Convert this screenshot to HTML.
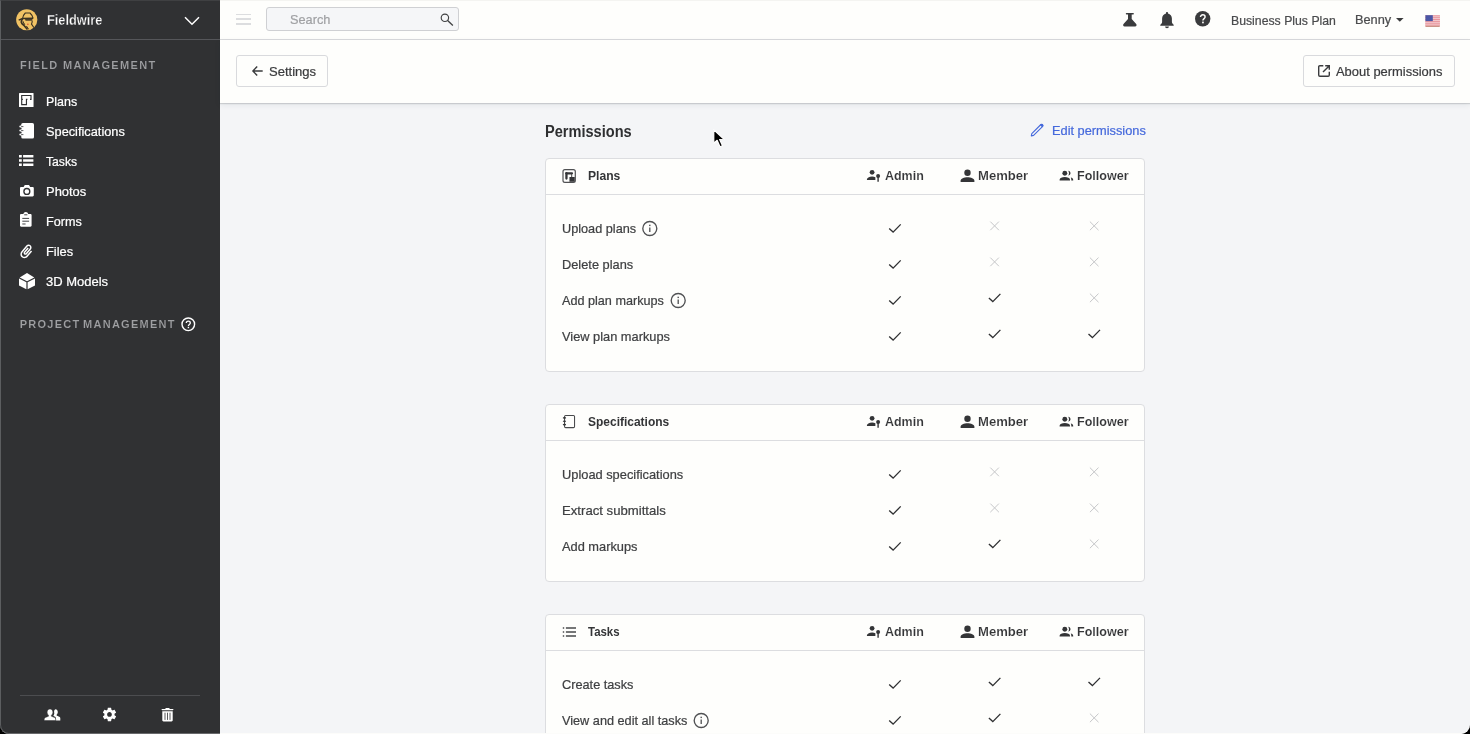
<!DOCTYPE html>
<html lang="en">
<head>
<meta charset="utf-8">
<title>Fieldwire - Permissions</title>
<style>
*{box-sizing:border-box;margin:0;padding:0}
html{background:#000}
html,body{width:1470px;height:734px;overflow:hidden;font-family:"Liberation Sans",sans-serif;font-size:13px;color:#3a3b3d}
#win{will-change:transform;position:absolute;left:0;top:0;width:1470px;height:734px;overflow:hidden;background:#f4f5f7;border-radius:0 0 9px 9px}
.abs{position:absolute}
.t{position:absolute;white-space:nowrap;line-height:16px;height:16px;transform-origin:0 50%}
#side{position:absolute;left:0;top:0;width:220px;height:734px;background:#303133;border-left:2px solid #303133}
#side .t{color:#fff}
#side .sec{-webkit-text-stroke:.15px #303133;color:#9fa0a3;font-size:11px;font-weight:bold;letter-spacing:2.1px}
#side svg{position:absolute}
#top{position:absolute;left:220px;top:0;width:1250px;height:40px;background:#fefefc;border-bottom:1px solid #d9dadc}
#sub{position:absolute;left:220px;top:40px;width:1250px;height:63px;background:#fefefc;box-shadow:0 1px 1px rgba(30,35,45,.16),0 2px 6px rgba(40,50,70,.08)}
.btn{position:absolute;height:32px;border:1px solid #d9dadd;border-radius:3px;background:#fefefc}
.card{position:absolute;left:545px;width:600px;background:#fefefc;border:1px solid #dcdde0;border-radius:4px}
.card .hd{position:absolute;left:0;top:0;width:598px;height:36px;border-bottom:1px solid #dcdde0}
.r{-webkit-text-stroke:.22px currentColor}
.b{font-weight:bold;-webkit-text-stroke:.12px #fefefc}
#c1t,#c2t,#c3t{-webkit-text-stroke:0}
#h1{-webkit-text-stroke:0}
#brand{-webkit-text-stroke:.3px #303133}
svg{position:absolute;overflow:visible}
</style>
</head>
<body>
<div id="win">

<!-- ============ SIDEBAR ============ -->
<div id="side">
  <div class="abs" style="left:-2px;top:39px;width:220px;height:1px;background:#55565a"></div>
  <!-- logo -->
  <svg style="left:13.700px;top:9.450px" width="21.500" height="21.500" viewBox="0 0 21.500 21.500">
    <circle cx="10.750" cy="10.750" r="10.600" fill="#f1c264"/>
    <path d="M6.600 9.500C6.900 7.200 7.800 5.400 9.300 4h4.700c1.500 1.300 2.500 3 2.900 5.100" fill="none" stroke="#3b3222" stroke-width="1.100"/>
    <path d="M2.700 11.100l3.800-1.500 10.800-.4" fill="none" stroke="#3b3222" stroke-width="1.500"/>
    <path d="M9 10.100h7.400v1.600H9.600z" fill="#3b3222" opacity=".9"/>
    <path d="M6.600 10c-.9 1-1.400 2-1.300 3.100.2 1.300 1.200 2.300 2.500 3.200l3.700 4.200" fill="none" stroke="#3b3222" stroke-width="1.700"/>
    <path d="M7 12.200c.1 1.400.8 2.500 2 3.400" fill="none" stroke="#3b3222" stroke-width="1.100"/>
    <path d="M16.200 11.800c.1 1.200-.2 2.300-.7 3.300l2.500 3.700" fill="none" stroke="#3b3222" stroke-width="1.100"/>
    <path d="M10.400 17l2.300 3.400" fill="none" stroke="#3b3222" stroke-width="1"/>
    <circle cx="11.900" cy="15.300" r=".75" fill="#d8402f"/>
  </svg>
  <div class="t b" id="brand" style="left:44.8px;top:12px;font-size:14px;transform:scaleX(0.9129)">Fieldwire</div>
  <svg style="left:181.500px;top:16px" width="16" height="10" viewBox="0 0 16 10"><path d="M1 1.300l7 7 7-7" fill="none" stroke="#fff" stroke-width="1.500"/></svg>

  <div class="t sec" id="sec1" style="left:18.0px;top:57px;letter-spacing:1.36px">FIELD MANAGEMENT</div>

  <div class="t nav r" id="n1" style="left:44px;top:94px;transform:scaleX(0.9573)">Plans</div>
  <div class="t nav r" id="n2" style="left:44px;top:124px;transform:scaleX(0.9828)">Specifications</div>
  <div class="t nav r" id="n3" style="left:44px;top:154px;transform:scaleX(0.9355)">Tasks</div>
  <div class="t nav r" id="n4" style="left:44px;top:184px;transform:scaleX(0.9948)">Photos</div>
  <div class="t nav r" id="n5" style="left:44px;top:214px;transform:scaleX(0.9711)">Forms</div>
  <div class="t nav r" id="n6" style="left:44px;top:244px;transform:scaleX(0.9880)">Files</div>
  <div class="t nav r" id="n7" style="left:44px;top:274px;transform:scaleX(0.9997)">3D Models</div>

  <div class="t sec" id="sec2" style="left:17.7px;top:316px;letter-spacing:1.26px;word-spacing:-1.7px">PROJECT MANAGEMENT</div>

  <div class="abs" style="left:18px;top:695px;width:180px;height:1px;background:#4c4d50"></div>

  <!-- nav icons (coordinates are page px minus the 2px left border) -->
  <svg style="left:17.150px;top:93.400px" width="15" height="14" viewBox="0 0 15 14">
    <rect x="0" y="0" width="14.550" height="14" rx=".6" fill="#fff"/>
    <path d="M11 6.300H12V2.450H2.700V11.650H7.450V6.400H8.400M2.700 6.300H3.900" fill="none" stroke="#303133" stroke-width="1.150"/>
  </svg>
  <svg style="left:16.900px;top:122.700px" width="15" height="16" viewBox="0 0 15 16">
    <path d="M1.300 3.600h2M1.300 7.600h2M1.300 11.600h2" stroke="#fff" stroke-width="2" stroke-linecap="round"/>
    <rect x="2.250" y="0" width="12.750" height="15.600" rx="1.600" fill="#fff"/>
    <path d="M2.500 3.600h1.500M2.500 7.600h1.500M2.500 11.600h1.500" stroke="#303133" stroke-width=".8" stroke-linecap="round"/><path d="M1.600 5.600h.8M1.600 9.600h.8" stroke="#303133" stroke-width="1.200"/>
  </svg>
  <svg style="left:17.200px;top:155px" width="15" height="12" viewBox="0 0 15 12">
    <path d="M0 0h2.800v2.500H0zM4.100 0h10.300v2.500H4.100zM0 4.200h2.800v2.500H0zM4.100 4.200h10.300v2.500H4.100zM0 8.400h2.800v2.500H0zM4.100 8.400h10.300v2.500H4.100z" fill="#fff"/>
  </svg>
  <svg style="left:17.700px;top:184.600px" width="13.800" height="11.400" viewBox="0 0 13.800 11.400">
    <path d="M1.200 1.900h2.400l.9-1.500C4.600.2 4.900 0 5.200 0h3.400c.3 0 .6.200.7.400l.9 1.500h2.400c.7 0 1.200.5 1.200 1.200v7.100c0 .7-.5 1.200-1.200 1.200H1.200C.5 11.400 0 10.900 0 10.200V3.100C0 2.400.5 1.900 1.200 1.900z" fill="#fff"/>
    <circle cx="6.850" cy="6.500" r="2.950" fill="#fff" stroke="#303133" stroke-width="1.350"/>
  </svg>
  <svg style="left:18.300px;top:212.300px" width="11.600" height="15" viewBox="0 0 11.600 15">
    <path d="M1.200 1.900h2.200C3.600.8 4.600 0 5.800 0s2.200.8 2.400 1.900h2.200c.7 0 1.200.5 1.200 1.200v10.500c0 .7-.5 1.200-1.200 1.200H1.200C.5 14.800 0 14.300 0 13.600V3.100c0-.7.500-1.200 1.200-1.200z" fill="#fff"/>
    <path d="M4.200 2.800h3.200" stroke="#303133" stroke-width=".9"/>
    <path d="M2.300 6.400h6.800M2.300 9.200h6.800M2.300 12h3.300" stroke="#303133" stroke-width=".9"/>
  </svg>
  <svg style="left:0;top:0" width="40" height="270" viewBox="0 0 40 270">
    <g transform="translate(24.600 251.600) rotate(-50) scale(.74) translate(-12 -12.500)"><path d="M2 12.500C2 9.460 4.460 7 7.500 7H18c2.210 0 4 1.790 4 4s-1.790 4-4 4H9.500C8.120 15 7 13.880 7 12.500S8.120 10 9.500 10H17v2H9.410c-.55 0-.55 1 0 1H18c1.100 0 2-.9 2-2s-.9-2-2-2H7.500C5.570 9 4 10.570 4 12.500S5.570 16 7.500 16H17v2H7.500C4.460 18 2 15.540 2 12.500z" fill="#fff"/></g>
  </svg>
  <svg style="left:16.600px;top:272.600px" width="16" height="16.200" viewBox="0 0 16 16.200">
    <path d="M8 0L15.300 4.500 8 8.200.7 4.500z" fill="#fff"/>
    <path d="M0 5.600L7.400 9.300V16.200L0 12.500z" fill="#fff"/>
    <path d="M16 5.600L8.600 9.300V16.200L16 12.500z" fill="#fff"/>
  </svg>
  <!-- help icon -->
  <svg style="left:179.300px;top:317px" width="15" height="15" viewBox="0 0 15 15">
    <circle cx="7.300" cy="7.300" r="6.300" fill="none" stroke="#fff" stroke-width="1.400"/>
    <path d="M5.300 6c0-1.200.8-1.900 2-1.900s2 .7 2 1.800c0 1.400-1.900 1.600-1.900 3" fill="none" stroke="#fff" stroke-width="1.300"/>
    <rect x="6.700" y="9.800" width="1.400" height="1.400" fill="#fff"/>
  </svg>
  <!-- bottom icons -->
  <svg style="left:41.500px;top:709px" width="17" height="12" viewBox="0 0 17 12">
    <path d="M11.400.2c1.400 0 2.400 1.200 2.400 2.800 0 1.200-.5 2.200-1.200 2.800v.8l2.700 1.200c.6.300 1 .8 1 1.500v2.300h-4.400V9.500c0-.9-.5-1.600-1.300-2L9.300 6.900c.5-.6.900-1.400 1-2.300C10.100 2.500 9.700 1 11.400.2z" fill="#fff"/>
    <path d="M6 0c1.700 0 2.900 1.400 2.900 3.200 0 1.300-.6 2.500-1.500 3.100v.9l3.200 1.400c.7.300 1.100.9 1.100 1.600v1.400H.2v-1.400c0-.7.400-1.300 1.100-1.600l3.200-1.400v-.9C3.700 5.700 3.100 4.500 3.100 3.200 3.100 1.400 4.300 0 6 0z" fill="#fff" stroke="#303133" stroke-width=".500"/>
  </svg>
  <svg style="left:100.100px;top:707px" width="15" height="15" viewBox="0 0 24 24">
    <path d="M19.430 12.980c.04-.32.070-.64.070-.98s-.03-.66-.07-.98l2.110-1.650c.19-.15.240-.42.120-.64l-2-3.460c-.12-.22-.39-.3-.61-.22l-2.490 1c-.52-.4-1.080-.73-1.690-.98l-.38-2.650C14.460 2.180 14.250 2 14 2h-4c-.25 0-.46.180-.49.420l-.38 2.650c-.61.250-1.170.59-1.690.98l-2.490-1c-.23-.09-.49 0-.61.220l-2 3.460c-.13.220-.07.490.12.640l2.110 1.650c-.04.320-.07.650-.07.980s.03.660.07.980l-2.110 1.650c-.19.150-.24.420-.12.640l2 3.460c.12.220.39.300.61.220l2.490-1c.52.400 1.080.73 1.690.98l.38 2.650c.03.240.24.420.49.420h4c.25 0 .46-.18.490-.42l.38-2.650c.61-.25 1.170-.59 1.690-.98l2.490 1c.23.090.49 0 .61-.22l2-3.460c.12-.22.070-.49-.12-.64l-2.110-1.650zM12 15.500c-1.930 0-3.500-1.570-3.500-3.500s1.570-3.500 3.500-3.500 3.500 1.570 3.500 3.500-1.570 3.500-3.500 3.500z" fill="#fff" transform="translate(-1 -1) scale(1.080)"/>
  </svg>
  <svg style="left:159px;top:708px" width="13" height="14" viewBox="0 0 13 14">
    <path d="M4.200.9C4.300.4 4.700 0 5.200 0h2.600c.5 0 .9.400 1 .9h3c.4 0 .7.300.7.700s-.3.700-.7.700H1.200c-.4 0-.7-.3-.7-.7s.3-.7.700-.7z" fill="#fff"/>
    <path d="M1.300 3.300h10.400v9c0 .7-.5 1.200-1.200 1.200h-8c-.7 0-1.200-.5-1.200-1.200z" fill="#fff"/>
    <path d="M4 4.700v7.200M6.500 4.700v7.200M9 4.700v7.200" stroke="#303133" stroke-width=".8"/>
  </svg>
</div>

<!-- ============ TOP BAR ============ -->
<div id="top">
  <div class="abs" style="left:16px;top:13.500px;width:15px;height:1.500px;background:#dcdddf"></div>
  <div class="abs" style="left:16px;top:18.300px;width:15px;height:1.500px;background:#dcdddf"></div>
  <div class="abs" style="left:16px;top:23px;width:15px;height:1.500px;background:#dcdddf"></div>
  <div class="abs" style="left:46px;top:7px;width:193px;height:24px;border:1px solid #cfd0d3;border-radius:3px;background:#f5f6f8"></div>
  <div class="t r" id="srch" style="left:70.4px;top:12px;color:#a0a1a4;transform:scaleX(0.9801)">Search</div>

  <!-- search magnifier -->
  <svg style="left:219.500px;top:13px" width="14" height="13" viewBox="0 0 14 13">
    <circle cx="4.900" cy="4.800" r="3.700" fill="none" stroke="#3f4042" stroke-width="1.150"/>
    <path d="M7.600 7.500l5.300 4.900" stroke="#3f4042" stroke-width="1.300"/>
  </svg>
  <!-- flask -->
  <svg style="left:903.200px;top:13.100px" width="14" height="14" viewBox="0 0 14 14">
    <path d="M3.500 0h6.700c.4 0 .7.300.7.700s-.3.700-.7.700H8.700v4.500l4.500 5.100c.8 1 .2 2.600-1.100 2.600H1.600c-1.300 0-1.900-1.600-1.100-2.600L5 5.900V1.400H3.500c-.4 0-.7-.3-.7-.7S3.100 0 3.500 0z" fill="#3a3b3d"/>
  </svg>
  <!-- bell -->
  <svg style="left:940px;top:11.700px" width="14" height="17" viewBox="0 0 14 17">
    <path d="M7 0c.6 0 1 .4 1 1v.5c2.300.5 3.900 2.500 3.900 5v3.400c0 .7.300 1.400.8 1.900l.9.900c.4.400.1 1-.4 1H.8c-.5 0-.8-.6-.4-1l.9-.9c.5-.5.800-1.200.8-1.900V6.500c0-2.500 1.600-4.500 3.900-5V1c0-.6.400-1 1-1z" fill="#3a3b3d"/>
    <path d="M5.100 14.500h3.800c0 1-.8 1.700-1.900 1.700s-1.900-.7-1.900-1.700z" fill="#3a3b3d"/>
  </svg>
  <!-- help -->
  <svg style="left:974.800px;top:11.300px" width="16" height="16" viewBox="0 0 16 16">
    <circle cx="7.700" cy="7.700" r="7.700" fill="#3a3b3d"/>
    <path d="M5.500 6.100c0-1.400 1-2.300 2.300-2.300s2.300.9 2.300 2.100c0 1.600-2.200 1.800-2.200 3.600" fill="none" stroke="#fefefc" stroke-width="1.450"/>
    <rect x="7.100" y="10.600" width="1.700" height="1.700" fill="#fefefc"/>
  </svg>
  <!-- caret -->
  <svg style="left:1176px;top:18.400px" width="8" height="4" viewBox="0 0 8 4"><path d="M0 0h7.600L3.800 3.800z" fill="#3a3b3d"/></svg>
  <!-- flag -->
  <svg style="left:1205px;top:14.800px" width="15.200" height="12" viewBox="0 0 15.200 12.400">
    <rect x="0" y="0" width="15.200" height="12.400" rx=".8" fill="#f6d4d6"/>
    <path d="M0 .9h15.200M0 2.800h15.200M0 4.700h15.200M0 6.600h15.200M0 8.500h15.200M0 10.400h15.200" stroke="#e68f97" stroke-width="1"/>
    <path d="M.3 11.700h14.600" stroke="#b97a68" stroke-width=".9"/>
    <rect x=".2" y=".2" width="7.600" height="6.100" fill="#4b57a6"/>
  </svg>
  <div class="t r" id="plan" style="left:1010.8px;top:13px;color:#4a4b4d;transform:scaleX(0.9428)">Business Plus Plan</div>
  <div class="t r" id="user" style="left:1135.2px;top:12px;color:#4a4b4d;transform:scaleX(0.9819)">Benny</div>
</div>

<!-- ============ SUB HEADER ============ -->
<div id="sub">
  <div class="btn" style="left:16px;top:15px;width:92px"></div>

  <div class="btn" style="left:1083px;top:15px;width:152px"></div>
  <!-- back arrow -->
  <svg style="left:31.500px;top:26px" width="11" height="10" viewBox="0 0 11 10">
    <path d="M5.200 .500L.9 5l4.300 4.500M1 5h9.700" fill="none" stroke="#3a3b3d" stroke-width="1.400"/>
  </svg>
  <!-- external link -->
  <svg style="left:1098px;top:25px" width="12" height="12" viewBox="0 0 12 12">
    <path d="M5.300 .700H1.900C1.200 .700 .7 1.200 .7 1.900v8.200c0 .7 .5 1.200 1.200 1.200h8.200c.7 0 1.200-.5 1.200-1.200V6.700" fill="none" stroke="#3a3b3d" stroke-width="1.400"/>
    <path d="M7.200 .700h4.100v4.100M11.100 .900L5 7" fill="none" stroke="#3a3b3d" stroke-width="1.400"/>
  </svg>
  <div class="t r" id="bset" style="left:48.7px;top:24px;color:#3a3b3d;transform:scaleX(1.0037)">Settings</div>
  <div class="t r" id="babout" style="left:1115.9px;top:24px;color:#3a3b3d;transform:scaleX(0.9945)">About permissions</div>
</div>

<!-- ============ CONTENT ============ -->
<div class="t b" id="h1" style="left:544.6px;top:122px;font-size:16px;line-height:20px;height:20px;color:#2e2f31;transform:scaleX(0.9106)">Permissions</div>
<div class="t r" id="edit" style="left:1051.5px;top:123px;color:#4569dc;transform:scaleX(0.9836)">Edit permissions</div>

<div class="card" id="c1" style="top:158px;height:214px"><div class="hd"></div></div>
<svg style="left:0;top:0" width="1470" height="734" viewBox="0 0 1470 734"><circle cx="872.100" cy="172.3" r="2.400" fill="#343537"/><path d="M866.800 180.0c0-2.300 2.400-3.500 5.300-3.500 1.300 0 2.400.2 3.300.7v2.800z" fill="#343537"/><circle cx="878.100" cy="176.1" r="2" fill="#343537"/><path d="M878.100 177.0v4.700" stroke="#343537" stroke-width="1.400"/><circle cx="967.500" cy="172.8" r="3.200" fill="#343537"/><path d="M960.600 182.1v-1.300c0-2.300 3.500-3.500 6.900-3.500s6.900 1.200 6.900 3.500v1.300z" fill="#343537"/><circle cx="1064.800" cy="173.2" r="2.450" fill="#343537"/><path d="M1059.600 180.6v-.9c0-1.700 2.600-2.600 5.200-2.600s5.200.9 5.200 2.600v.9z" fill="#343537"/><path d="M1068.200 170.8c1.400.2 2.300 1.200 2.300 2.400s-.9 2.200-2.300 2.400c.5-.7.800-1.500.800-2.400s-.3-1.700-.8-2.400z" fill="#343537"/><path d="M1070.800 177.6c1.300.4 2.400 1.100 2.400 2.200v.8h-1.900v-.9c0-.9-.2-1.500-.5-2.100z" fill="#343537"/><g transform="translate(562.35 169.05)"><rect x=".65" y=".65" width="12.300" height="12.600" rx="1.900" fill="none" stroke="#505153" stroke-width="1.200"/><path d="M4 4.250H9.600" stroke="#343537" stroke-width="2.300" stroke-linecap="round"/><path d="M4.100 4.200V9.500" stroke="#343537" stroke-width="2.300" stroke-linecap="round"/><path d="M9.350 5V8.200" stroke="#343537" stroke-width=".9"/><rect x="7.100" y="7.950" width="5.300" height="4.750" fill="#343537"/></g><circle cx="649.8" cy="228.5" r="7" fill="none" stroke="#505153" stroke-width="1.350"/><path d="M649.8 227.6v4.400" stroke="#4d4e50" stroke-width="1.300"/><rect x="649.1" y="224.7" width="1.400" height="1.400" fill="#4d4e50"/><path d="M889.2 228.6l3.900 3.500 7.600-7.700" fill="none" stroke="#2f3032" stroke-width="1.350"/><path d="M990.3 221.6l8.600 8.600M998.9 221.6l-8.600 8.600" fill="none" stroke="#c6c7c9" stroke-width="1"/><path d="M1089.9 221.6l8.600 8.600M1098.5 221.6l-8.600 8.600" fill="none" stroke="#c6c7c9" stroke-width="1"/><path d="M889.2 264.6l3.900 3.500 7.600-7.700" fill="none" stroke="#2f3032" stroke-width="1.350"/><path d="M990.3 257.6l8.600 8.600M998.9 257.6l-8.600 8.600" fill="none" stroke="#c6c7c9" stroke-width="1"/><path d="M1089.9 257.6l8.600 8.600M1098.5 257.6l-8.600 8.600" fill="none" stroke="#c6c7c9" stroke-width="1"/><circle cx="678.2" cy="300.5" r="7" fill="none" stroke="#505153" stroke-width="1.350"/><path d="M678.2 299.6v4.400" stroke="#4d4e50" stroke-width="1.300"/><rect x="677.5" y="296.7" width="1.400" height="1.400" fill="#4d4e50"/><path d="M889.2 300.6l3.900 3.500 7.600-7.700" fill="none" stroke="#2f3032" stroke-width="1.350"/><path d="M988.9 298.1l3.900 3.500 7.600-7.700" fill="none" stroke="#2f3032" stroke-width="1.350"/><path d="M1089.9 293.6l8.600 8.600M1098.5 293.6l-8.600 8.600" fill="none" stroke="#c6c7c9" stroke-width="1"/><path d="M889.2 336.6l3.900 3.500 7.600-7.700" fill="none" stroke="#2f3032" stroke-width="1.350"/><path d="M988.9 334.1l3.900 3.500 7.600-7.700" fill="none" stroke="#2f3032" stroke-width="1.350"/><path d="M1088.5 334.1l3.900 3.500 7.600-7.700" fill="none" stroke="#2f3032" stroke-width="1.350"/></svg>
<div class="t b" id="c1t" style="left:587.6px;top:168px;color:#343537;transform:scaleX(0.9322)">Plans</div>
<div class="t b" id="c1a" style="left:884.5px;top:168px;color:#343537;transform:scaleX(0.9580)">Admin</div>
<div class="t b" id="c1m" style="left:978.1px;top:168px;color:#343537;transform:scaleX(1.0044)">Member</div>
<div class="t b" id="c1f" style="left:1077.1px;top:168px;color:#343537;transform:scaleX(0.9664)">Follower</div>
<div class="t r" id="c1r0" style="left:562.4px;top:221px;color:#3f4042;transform:scaleX(0.9770)">Upload plans</div>
<div class="t r" id="c1r1" style="left:562.4px;top:257px;color:#3f4042;transform:scaleX(0.9848)">Delete plans</div>
<div class="t r" id="c1r2" style="left:562.4px;top:293px;color:#3f4042;transform:scaleX(0.9721)">Add plan markups</div>
<div class="t r" id="c1r3" style="left:562.4px;top:329px;color:#3f4042;transform:scaleX(0.9850)">View plan markups</div>
<div class="card" id="c2" style="top:404px;height:178px"><div class="hd"></div></div>
<svg style="left:0;top:0" width="1470" height="734" viewBox="0 0 1470 734"><circle cx="872.100" cy="418.3" r="2.400" fill="#343537"/><path d="M866.800 426.0c0-2.300 2.400-3.500 5.300-3.500 1.300 0 2.400.2 3.300.7v2.800z" fill="#343537"/><circle cx="878.100" cy="422.1" r="2" fill="#343537"/><path d="M878.100 423.0v4.700" stroke="#343537" stroke-width="1.400"/><circle cx="967.500" cy="418.8" r="3.200" fill="#343537"/><path d="M960.600 428.1v-1.300c0-2.300 3.500-3.500 6.900-3.500s6.900 1.200 6.900 3.500v1.300z" fill="#343537"/><circle cx="1064.800" cy="419.2" r="2.450" fill="#343537"/><path d="M1059.600 426.6v-.9c0-1.700 2.600-2.600 5.200-2.600s5.200.9 5.200 2.600v.9z" fill="#343537"/><path d="M1068.200 416.8c1.400.2 2.300 1.200 2.300 2.400s-.9 2.200-2.300 2.400c.5-.7.800-1.500.800-2.400s-.3-1.700-.8-2.400z" fill="#343537"/><path d="M1070.800 423.6c1.300.4 2.400 1.100 2.400 2.200v.8h-1.900v-.9c0-.9-.2-1.500-.5-2.100z" fill="#343537"/><g><rect x="564.550" y="415.450" width="10" height="12.150" rx="1.100" fill="none" stroke="#48494b" stroke-width="1.050"/><ellipse cx="564.450" cy="417.900" rx="1.700" ry=".8" fill="#343537"/><ellipse cx="564.450" cy="421.300" rx="1.700" ry=".8" fill="#343537"/><ellipse cx="564.450" cy="424.650" rx="1.700" ry=".8" fill="#343537"/></g><path d="M889.2 474.6l3.900 3.500 7.600-7.700" fill="none" stroke="#2f3032" stroke-width="1.350"/><path d="M990.3 467.6l8.600 8.600M998.9 467.6l-8.600 8.600" fill="none" stroke="#c6c7c9" stroke-width="1"/><path d="M1089.9 467.6l8.600 8.600M1098.5 467.6l-8.600 8.600" fill="none" stroke="#c6c7c9" stroke-width="1"/><path d="M889.2 510.6l3.900 3.500 7.600-7.700" fill="none" stroke="#2f3032" stroke-width="1.350"/><path d="M990.3 503.6l8.600 8.600M998.9 503.6l-8.600 8.600" fill="none" stroke="#c6c7c9" stroke-width="1"/><path d="M1089.9 503.6l8.600 8.600M1098.5 503.6l-8.600 8.600" fill="none" stroke="#c6c7c9" stroke-width="1"/><path d="M889.2 546.6l3.900 3.500 7.600-7.700" fill="none" stroke="#2f3032" stroke-width="1.350"/><path d="M988.9 544.1l3.900 3.500 7.600-7.700" fill="none" stroke="#2f3032" stroke-width="1.350"/><path d="M1089.9 539.6l8.600 8.600M1098.5 539.6l-8.600 8.600" fill="none" stroke="#c6c7c9" stroke-width="1"/></svg>
<div class="t b" id="c2t" style="left:587.7px;top:414px;color:#343537;transform:scaleX(0.9215)">Specifications</div>
<div class="t b" id="c2a" style="left:884.5px;top:414px;color:#343537;transform:scaleX(0.9580)">Admin</div>
<div class="t b" id="c2m" style="left:978.1px;top:414px;color:#343537;transform:scaleX(1.0044)">Member</div>
<div class="t b" id="c2f" style="left:1077.1px;top:414px;color:#343537;transform:scaleX(0.9664)">Follower</div>
<div class="t r" id="c2r0" style="left:562.4px;top:467px;color:#3f4042;transform:scaleX(0.9865)">Upload specifications</div>
<div class="t r" id="c2r1" style="left:562.4px;top:503px;color:#3f4042;transform:scaleX(1.0115)">Extract submittals</div>
<div class="t r" id="c2r2" style="left:562.4px;top:539px;color:#3f4042;transform:scaleX(0.9850)">Add markups</div>
<div class="card" id="c3" style="top:614px;height:140px"><div class="hd"></div></div>
<svg style="left:0;top:0" width="1470" height="734" viewBox="0 0 1470 734"><circle cx="872.100" cy="628.3" r="2.400" fill="#343537"/><path d="M866.800 636.0c0-2.300 2.400-3.500 5.300-3.500 1.300 0 2.400.2 3.300.7v2.800z" fill="#343537"/><circle cx="878.100" cy="632.1" r="2" fill="#343537"/><path d="M878.100 633.0v4.700" stroke="#343537" stroke-width="1.400"/><circle cx="967.500" cy="628.8" r="3.200" fill="#343537"/><path d="M960.600 638.1v-1.300c0-2.300 3.500-3.500 6.900-3.500s6.900 1.200 6.900 3.500v1.300z" fill="#343537"/><circle cx="1064.800" cy="629.2" r="2.450" fill="#343537"/><path d="M1059.600 636.6v-.9c0-1.700 2.600-2.600 5.200-2.600s5.200.9 5.200 2.600v.9z" fill="#343537"/><path d="M1068.200 626.8c1.400.2 2.300 1.200 2.300 2.400s-.9 2.200-2.300 2.400c.5-.7.800-1.500.800-2.400s-.3-1.700-.8-2.400z" fill="#343537"/><path d="M1070.800 633.6c1.300.4 2.400 1.100 2.400 2.200v.8h-1.900v-.9c0-.9-.2-1.500-.5-2.100z" fill="#343537"/><g><path d="M562.800 628h1.400M565.900 628h10.100M562.800 632h1.400M565.900 632h10.100M562.800 636h1.400M565.900 636h10.100" stroke="#48494b" stroke-width="1.500"/></g><path d="M889.2 684.6l3.900 3.500 7.600-7.700" fill="none" stroke="#2f3032" stroke-width="1.350"/><path d="M988.9 682.1l3.900 3.500 7.600-7.700" fill="none" stroke="#2f3032" stroke-width="1.350"/><path d="M1088.5 682.1l3.900 3.500 7.600-7.700" fill="none" stroke="#2f3032" stroke-width="1.350"/><circle cx="701.2" cy="720.5" r="7" fill="none" stroke="#505153" stroke-width="1.350"/><path d="M701.2 719.6v4.400" stroke="#4d4e50" stroke-width="1.300"/><rect x="700.5" y="716.7" width="1.400" height="1.400" fill="#4d4e50"/><path d="M889.2 720.6l3.900 3.500 7.600-7.700" fill="none" stroke="#2f3032" stroke-width="1.350"/><path d="M988.9 718.1l3.900 3.500 7.600-7.700" fill="none" stroke="#2f3032" stroke-width="1.350"/><path d="M1089.9 713.6l8.600 8.600M1098.5 713.6l-8.600 8.600" fill="none" stroke="#c6c7c9" stroke-width="1"/></svg>
<div class="t b" id="c3t" style="left:588.3px;top:624px;color:#343537;transform:scaleX(0.8797)">Tasks</div>
<div class="t b" id="c3a" style="left:884.5px;top:624px;color:#343537;transform:scaleX(0.9580)">Admin</div>
<div class="t b" id="c3m" style="left:978.1px;top:624px;color:#343537;transform:scaleX(1.0044)">Member</div>
<div class="t b" id="c3f" style="left:1077.1px;top:624px;color:#343537;transform:scaleX(0.9664)">Follower</div>
<div class="t r" id="c3r0" style="left:562.4px;top:677px;color:#3f4042;transform:scaleX(0.9794)">Create tasks</div>
<div class="t r" id="c3r1" style="left:562.4px;top:713px;color:#3f4042;transform:scaleX(0.9767)">View and edit all tasks</div>

<svg style="left:1030px;top:123px" width="15" height="14" viewBox="0 0 15 14">
  <path d="M1.300 12.900l.5-2.300L10.900 1.500c.4-.4 1-.4 1.400 0l.4.400c.4.400.4 1 0 1.400L3.600 12.400z" fill="none" stroke="#4569dc" stroke-width="1.100" stroke-linejoin="round"/>
  <path d="M9.900 2.100l2.200 2.200 .9-.9c.4-.4.4-1 0-1.400l-.8-.8c-.4-.4-1-.4-1.400 0z" fill="#4569dc"/>
</svg>
<svg style="left:710.500px;top:127.300px" width="16.800" height="21.600" viewBox="0 0 14 18">
  <path d="M2.300 2.400v11.200l2.800-2.500 2.400 5.400 2.100-.9-2.400-5.200 3.700-.2z" fill="#000" stroke="#fff" stroke-width="1" stroke-linejoin="round"/>
</svg>
<div class="abs" style="left:0;top:0;width:220px;height:734px;border-left:1px solid #5c5e60;border-top:1px solid #3f4042;border-bottom:1px solid #68696b;border-radius:0 0 0 9px"></div>
<div class="abs" style="left:220px;top:0;width:1250px;height:734px;border-top:1px solid #f4f4f1;border-bottom:1px solid #fcfcfa;border-radius:0 0 9px 0"></div>
</div>
</body>
</html>
